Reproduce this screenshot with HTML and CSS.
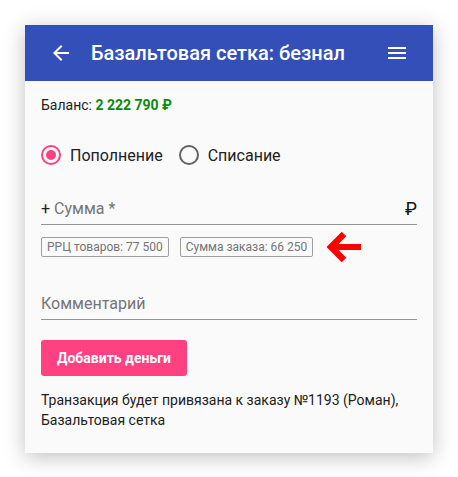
FILE: index.html
```html
<!DOCTYPE html>
<html>
    <head>
        <meta charset="utf-8">
        <title>Базальтовая сетка: безнал</title>
        <link rel="stylesheet" href="styles.css">
    </head>
    <body>
        <div class="card">
            <div class="toolbar">
                <svg class="toolbar_icon" viewBox="0 0 24 24" width="24" height="24">
                    <path d="M20 11H7.83l5.59-5.59L12 4l-8 8 8 8 1.41-1.41L7.83 13H20v-2z" fill="#fff"/>
                </svg>
                <div class="toolbar_title">Базальтовая сетка: безнал</div>
                <svg class="toolbar_icon" viewBox="0 0 24 24" width="24" height="24">
                    <path d="M3 18h18v-2H3v2zm0-5h18v-2H3v2zm0-7v2h18V6H3z" fill="#fff"/>
                </svg>
            </div>

            <div class="content">
                <div class="balance">Баланс: <b>2 222 790 ₽</b></div>

                <div class="radios">
                    <div class="radio checked"><span class="radio_circle"></span>Пополнение</div>
                    <div class="radio"><span class="radio_circle"></span>Списание</div>
                </div>

                <div class="field sum_field">
                    <span class="prefix">+</span>
                    <span class="label">Сумма *</span>
                    <span class="suffix">₽</span>
                </div>

                <div class="chips">
                    <div class="chip">РРЦ товаров: 77 500</div>
                    <div class="chip">Сумма заказа: 66 250</div>
                    <svg class="pointer" viewBox="0 0 34 34" width="34" height="34">
                        <path d="M34 17H7" stroke="#f00" stroke-width="6" fill="none"/>
                        <path d="M17 4L4 17L17 30" stroke="#f00" stroke-width="6.5" fill="none"/>
                    </svg>
                </div>

                <div class="field comment_field">
                    <span class="label">Комментарий</span>
                </div>

                <div class="button">Добавить деньги</div>

                <div class="note">Транзакция будет привязана к заказу №1193 (Роман), Базальтовая сетка</div>
            </div>
        </div>
    </body>
</html>
```

FILE: styles.css
```css
* {
    box-sizing: border-box;
}

body {
    margin: 0;
    padding: 25px;
    background-color: #fff;
    font-family: Roboto, "Liberation Sans", sans-serif;
    color: #212121;
}

.card {
    width: 408px;
    background-color: #fafafa;
    box-shadow: 0 4px 20px rgba(0, 0, 0, 0.25);
}

.toolbar {
    height: 56px;
    background-color: #344fb8;
    display: flex;
    align-items: center;
    padding: 0 24px;
    color: #fff;
}

.toolbar_title {
    flex: 1;
    margin-left: 18px;
    font-size: 20px;
    font-weight: 500;
}

.content {
    padding: 14px 16px 23px 16px;
}

.balance {
    font-size: 14px;
    line-height: 20px;
}

.balance b {
    color: #0b8a0b;
    font-weight: 700;
}

.radios {
    display: flex;
    align-items: center;
    margin-top: 28px;
    height: 24px;
}

.radio {
    display: flex;
    align-items: center;
    font-size: 16px;
    margin-right: 16px;
}

.radio_circle {
    width: 20px;
    height: 20px;
    border: 2px solid #616161;
    border-radius: 50%;
    margin-right: 9px;
    display: flex;
    justify-content: center;
    align-items: center;
}

.radio.checked .radio_circle {
    border-color: #ff4081;
}

.radio.checked .radio_circle::after {
    content: "";
    width: 10px;
    height: 10px;
    border-radius: 50%;
    background-color: #ff4081;
}

.field {
    display: flex;
    align-items: center;
    font-size: 16px;
    line-height: 24px;
    padding-bottom: 3px;
    border-bottom: 1px solid #949494;
}

.sum_field {
    margin-top: 30px;
}

.prefix {
    margin-right: 4px;
}

.label {
    flex: 1;
    color: #757575;
}

.suffix {
    font-size: 18px;
    color: #111;
}

.chips {
    display: flex;
    align-items: center;
    margin-top: 5px;
}

.chip {
    font-size: 12px;
    line-height: 18px;
    color: #757575;
    border: 1px solid #9e9e9e;
    border-radius: 2px;
    padding: 0 5px;
    margin-right: 11px;
}

.pointer {
    margin-left: 3px;
}

.comment_field {
    margin-top: 28px;
}

.button {
    display: inline-block;
    margin-top: 20px;
    height: 36px;
    line-height: 36px;
    padding: 0 16px;
    background-color: #ff4081;
    color: #fff;
    font-size: 14px;
    font-weight: 700;
    border-radius: 3px;
}

.note {
    margin-top: 14px;
    font-size: 14px;
    line-height: 20px;
}
```
